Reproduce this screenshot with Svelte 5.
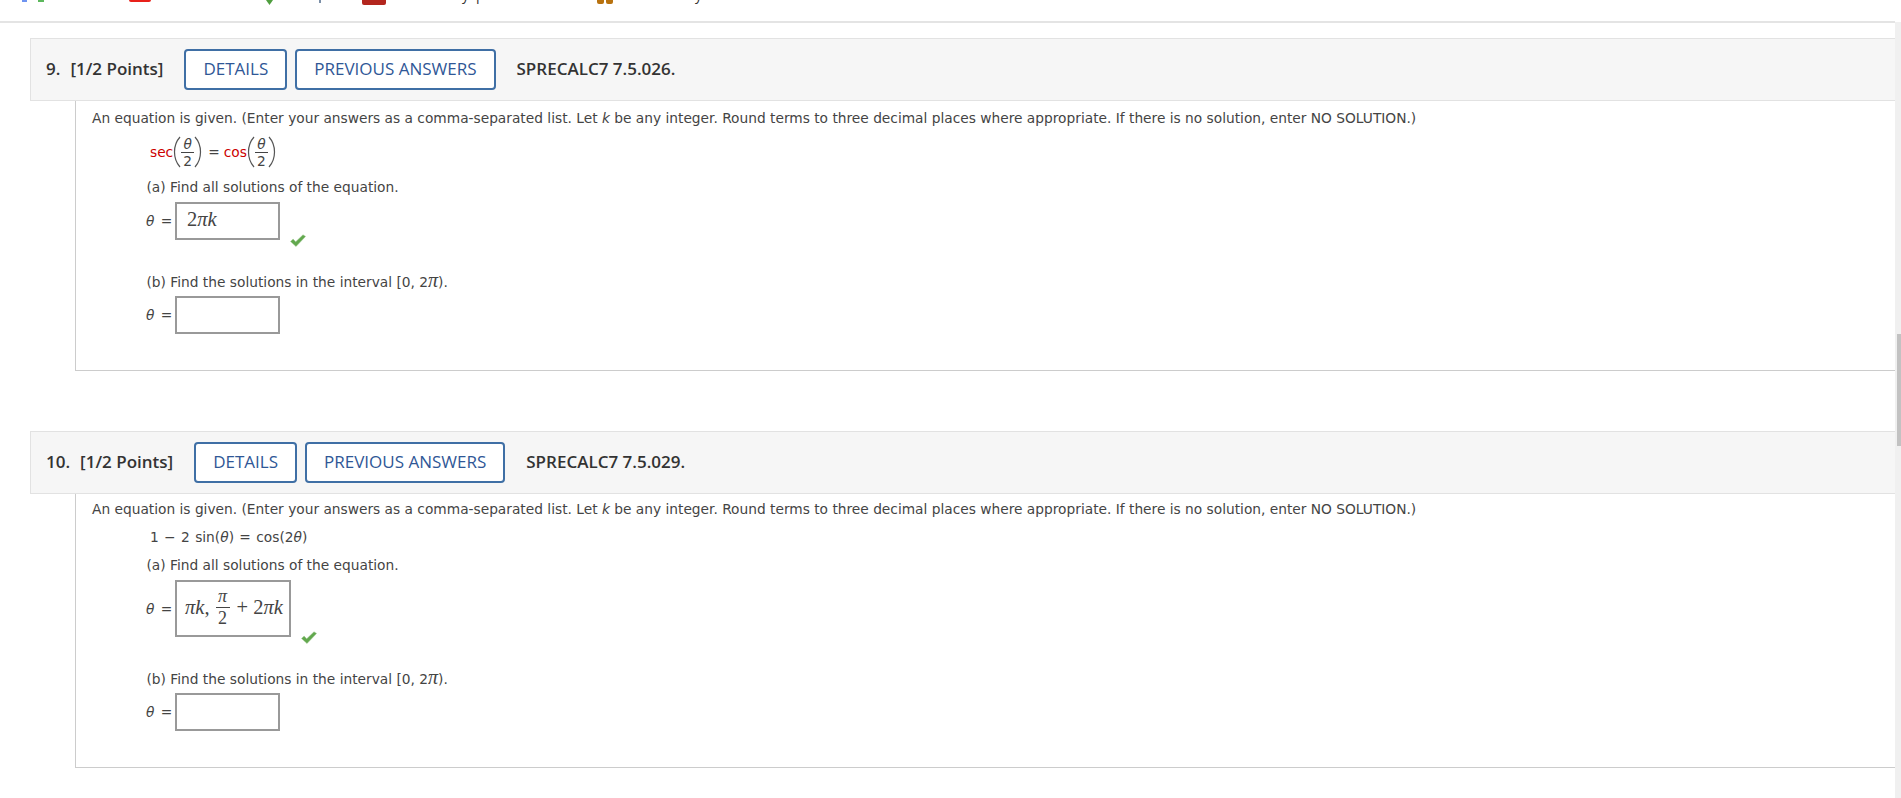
<script lang="ts">
	interface Question {
		num: string;
		points: string;
		code: string;
	}

	const q9: Question = { num: '9.', points: '[1/2 Points]', code: 'SPRECALC7 7.5.026.' };
	const q10: Question = { num: '10.', points: '[1/2 Points]', code: 'SPRECALC7 7.5.029.' };

	// bottoms of the browser bookmark icons that poke in at the very top
	const marks = [
		{ left: 22, width: 5, height: 2, color: '#6f94f0', round: 0 },
		{ left: 38, width: 6, height: 2, color: '#5cb85c', round: 0 },
		{ left: 129, width: 22, height: 2, color: '#e8211a', round: 3 },
		{ left: 266, width: 7, height: 5, color: '#4f9e3f', round: 0, tri: true },
		{ left: 319, width: 2, height: 3, color: '#7b8fa8', round: 0 },
		{ left: 362, width: 24, height: 5, color: '#b3261e', round: 2 },
		{ left: 597, width: 7, height: 4, color: '#b8720f', round: 2 },
		{ left: 606, width: 7, height: 4, color: '#b8720f', round: 2 }
	];
</script>

{#snippet header(q: Question)}
	<div class="q-header">
		<span class="q-points"><span class="q-num">{q.num}</span>{q.points}</span>
		<button class="q-btn">DETAILS</button>
		<button class="q-btn">PREVIOUS ANSWERS</button>
		<span class="q-code">{q.code}</span>
	</div>
{/snippet}

{#snippet intro()}
	An equation is given. (Enter your answers as a comma-separated list. Let <i>k</i> be any integer. Round terms to three decimal places where appropriate. If there is no solution, enter NO SOLUTION.)
{/snippet}

{#snippet check()}
	<svg class="check" width="16" height="13" viewBox="0 0 16 13"><path d="M0.5 7.5l2.6-2.4 2.6 2.7L13 0.8l2.6 1.6L6 12.6z" fill="#62a84e" stroke="#a3cc94" stroke-width=".5" /></svg>
{/snippet}

{#snippet frac(top: string, bottom: string)}
	<span class="frac"><span class="frac-top">{top}</span><span class="frac-bot">{bottom}</span></span>
{/snippet}

{#snippet parenL()}
	<svg class="paren" width="8" height="32" viewBox="0 0 8 32"><path d="M7 1C2.5 6 1.5 11 1.5 16S2.5 26 7 31" fill="none" stroke="#555" stroke-width="1.2" /></svg>
{/snippet}

{#snippet parenR()}
	<svg class="paren" width="8" height="32" viewBox="0 0 8 32"><path d="M1 1C5.5 6 6.5 11 6.5 16S5.5 26 1 31" fill="none" stroke="#555" stroke-width="1.2" /></svg>
{/snippet}

<div class="page">
	<div class="topbar">
		{#each marks as m}
			<span class="mark" class:tri={m.tri} style="left:{m.left}px;width:{m.width}px;height:{m.height}px;background:{m.color};border-radius:0 0 {m.round}px {m.round}px"></span>
		{/each}
		<span class="stub" style="left:462px">y</span>
		<span class="stub" style="left:476px">p</span>
		<span class="stub" style="left:695px">y</span>
	</div>

	<section class="question first">
		{@render header(q9)}
		<div class="q-body body-1">
			<p class="intro">{@render intro()}</p>
			<div class="eq eq-sec">
				<span class="red">sec</span>{@render parenL()}{@render frac('θ', '2')}{@render parenR()}
				<span class="equals">=</span>
				<span class="red">cos</span>{@render parenL()}{@render frac('θ', '2')}{@render parenR()}
			</div>
			<p class="part part-a">(a) Find all solutions of the equation.</p>
			<div class="answer">
				<span class="theta"><i>θ</i> =</span>
				<div class="box"><span class="math math-up">2<i>πk</i></span></div>
				{@render check()}
			</div>
			<p class="part part-b">(b) Find the solutions in the interval [0, 2<i class="pi">π</i>).</p>
			<div class="answer answer-b">
				<span class="theta"><i>θ</i> =</span>
				<div class="box"></div>
			</div>
		</div>
	</section>

	<section class="question second">
		{@render header(q10)}
		<div class="q-body body-2">
			<p class="intro">{@render intro()}</p>
			<div class="eq eq-sin">1 − 2 sin(<i>θ</i>) = cos(2<i>θ</i>)</div>
			<p class="part part-a2">(a) Find all solutions of the equation.</p>
			<div class="answer">
				<span class="theta"><i>θ</i> =</span>
				<div class="box box-tall">
					<span class="math"><i>πk</i>,</span>
					<span class="math-frac">{@render frac('π', '2')}</span>
					<span class="math">+ 2<i>πk</i></span>
				</div>
				{@render check()}
			</div>
			<p class="part part-b">(b) Find the solutions in the interval [0, 2<i class="pi">π</i>).</p>
			<div class="answer answer-b">
				<span class="theta"><i>θ</i> =</span>
				<div class="box"></div>
			</div>
		</div>
	</section>

	<div class="scrollbar"><div class="thumb"></div></div>
</div>

<style>
	:global(body) {
		background: #fff;
		overflow: hidden;
	}

	.page {
		height: 798px;
		overflow: hidden;
		position: relative;
		font-family: 'DejaVu Sans', Verdana, sans-serif;
		font-size: 13.75px;
		color: #444;
		padding-right: 6px;
		box-sizing: border-box;
	}

	.topbar {
		position: relative;
		height: 21px;
		border-bottom: 2px solid #e4e4e4;
		overflow: hidden;
	}

	.mark {
		position: absolute;
		top: 0;
	}

	.tri {
		clip-path: polygon(0 0, 100% 0, 50% 100%);
	}

	.stub {
		position: absolute;
		top: -13px;
		font-family: 'Open Sans', sans-serif;
		font-size: 14px;
		line-height: 16px;
		color: #333;
	}

	.question {
		margin-left: 30px;
	}

	.first {
		margin-top: 15px;
	}

	.second {
		margin-top: 60px;
	}

	.q-header {
		display: flex;
		align-items: center;
		height: 61px;
		background: #f6f6f6;
		border: 1px solid #e2e2e2;
		border-right: none;
		font-family: 'Open Sans', sans-serif;
		font-size: 17px;
		font-weight: 600;
		color: #333;
		padding-left: 15px;
	}

	.q-num {
		margin-right: 10px;
	}

	.q-points {
		margin-right: 13px;
		margin-bottom: 2px;
	}

	.q-btn {
		height: 41px;
		padding: 0 17px 2px;
		margin-left: 8px;
		background: #fff;
		border: 2px solid #3f6fa5;
		border-radius: 4px;
		font-family: inherit;
		font-size: 17px;
		font-weight: 400;
		color: #2f5796;
	}

	.q-code {
		margin-left: 21px;
		margin-bottom: 2px;
	}

	.q-body {
		margin-left: 45px;
		border-left: 1px solid #ccc;
		border-bottom: 1px solid #ccc;
		padding-left: 16px;
		box-sizing: border-box;
	}

	.body-1 {
		height: 270px;
		padding-top: 9px;
	}

	.body-2 {
		height: 274px;
		padding-top: 7px;
	}

	p {
		margin: 0;
		line-height: 16px;
	}

	.intro {
		white-space: nowrap;
	}

	.eq {
		margin-left: 58px;
		display: flex;
		align-items: center;
	}

	.eq-sec {
		margin-top: 10px;
		height: 32px;
	}

	.eq-sin {
		margin-top: 12px;
		height: 16px;
		white-space: pre;
		line-height: 16px;
		word-spacing: 1px;
	}

	.red {
		color: #cc0000;
	}

	.paren {
		flex: none;
	}

	.equals {
		margin: 0 4px 0 6px;
	}

	.frac {
		display: inline-flex;
		flex-direction: column;
		align-items: center;
		width: 13px;
		line-height: 16px;
	}

	.frac-top {
		font-style: italic;
		border-bottom: 1px solid #444;
		width: 100%;
		text-align: center;
	}

	.part {
		margin-left: 54.5px;
	}

	.part-a {
		margin-top: 11px;
	}

	.part-a2 {
		margin-top: 12px;
	}

	.part-b {
		margin-top: 34px;
	}

	.answer {
		margin: 7px 0 0 55px;
		display: flex;
		align-items: center;
	}

	.answer-b {
		margin-top: 6px;
	}

	.theta {
		width: 28px;
		flex: none;
		word-spacing: 2px;
		margin-left: -1px;
		padding-right: 1px;
	}

	.box {
		width: 105px;
		height: 38px;
		box-sizing: border-box;
		border: 2px solid #999;
		display: flex;
		align-items: center;
		padding-left: 8px;
		gap: 8px;
		background: #fff;
	}

	.box-tall {
		width: 116px;
		height: 57px;
		padding-bottom: 3px;
	}

	.math {
		font-family: 'Liberation Serif', serif;
		font-size: 20.5px;
		white-space: nowrap;
		color: #444;
	}

	.math-up {
		margin-left: 2px;
		margin-bottom: 4px;
	}

	.math-frac {
		font-family: 'Liberation Serif', serif;
		font-size: 18px;
		margin: 0 -1px 0 -2px;
	}

	.math-frac .frac {
		width: 14px;
		line-height: 21px;
	}

	.pi {
		font-family: 'Liberation Serif', serif;
		font-size: 20px;
		line-height: 0;
	}

	.check {
		align-self: flex-end;
		margin: 0 0 -7px 10px;
	}

	.scrollbar {
		position: absolute;
		top: 22px;
		right: 0;
		bottom: 0;
		width: 6px;
		background: #f0f0f0;
	}

	.thumb {
		position: absolute;
		top: 312px;
		right: 0;
		width: 4px;
		height: 112px;
		background: #c2c2c2;
	}
</style>
